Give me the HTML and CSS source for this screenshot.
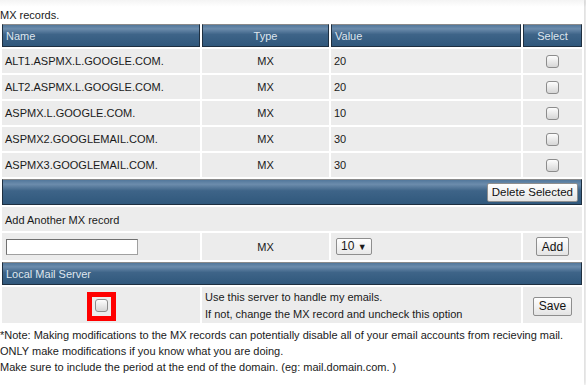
FILE: index.html
```html
<!DOCTYPE html>
<html lang="en">
<head>
    <meta charset="UTF-8">
    <title>MX records</title>
    <link rel="stylesheet" href="styles.css">
</head>
<body>
    <div class="pagina">
        <p class="intro">MX records.</p>
        <!-- Elenco record MX -->
        <table class="griglia">
            <tr>
                <th class="col-nome">Name</th>
                <th class="col-tipo centro">Type</th>
                <th class="col-valore">Value</th>
                <th class="col-sel centro">Select</th>
            </tr>
            <tr>
                <td>ALT1.ASPMX.L.GOOGLE.COM.</td>
                <td class="centro">MX</td>
                <td>20</td>
                <td class="centro"><span class="spunta"></span></td>
            </tr>
            <tr>
                <td>ALT2.ASPMX.L.GOOGLE.COM.</td>
                <td class="centro">MX</td>
                <td>20</td>
                <td class="centro"><span class="spunta"></span></td>
            </tr>
            <tr>
                <td>ASPMX.L.GOOGLE.COM.</td>
                <td class="centro">MX</td>
                <td>10</td>
                <td class="centro"><span class="spunta"></span></td>
            </tr>
            <tr>
                <td>ASPMX2.GOOGLEMAIL.COM.</td>
                <td class="centro">MX</td>
                <td>30</td>
                <td class="centro"><span class="spunta"></span></td>
            </tr>
            <tr>
                <td>ASPMX3.GOOGLEMAIL.COM.</td>
                <td class="centro">MX</td>
                <td>30</td>
                <td class="centro"><span class="spunta"></span></td>
            </tr>
            <!-- Barra elimina -->
            <tr>
                <th colspan="4" class="barra"><button class="bottone">Delete Selected</button></th>
            </tr>
            <!-- Nuovo record -->
            <tr>
                <td colspan="4" class="riga-titolo">Add Another MX record</td>
            </tr>
            <tr>
                <td><span class="campo"></span></td>
                <td class="centro">MX</td>
                <td><span class="scelta">10 <span class="freccia">&#9660;</span></span></td>
                <td class="centro"><button class="bottone">Add</button></td>
            </tr>
            <!-- Server locale -->
            <tr>
                <th colspan="4">Local Mail Server</th>
            </tr>
            <tr class="riga-server">
                <td class="centro"><span class="riquadro"><span class="spunta"></span></span></td>
                <td colspan="2" class="testo-server">Use this server to handle my emails.<br>If not, change the MX record and uncheck this option</td>
                <td class="centro"><button class="bottone">Save</button></td>
            </tr>
        </table>
        <div class="nota">
            *Note: Making modifications to the MX records can potentially disable all of your email accounts from recieving mail.<br>
            ONLY make modifications if you know what you are doing.<br>
            Make sure to include the period at the end of the domain. (eg: mail.domain.com. )
        </div>
    </div>
</body>
</html>
```

FILE: styles.css
```css
/* Stile globale */
body {
    font-family: "Liberation Sans", Arial, sans-serif;
    font-size: 11px;
    margin: 0;
    padding: 0;
    background: linear-gradient(#ececec, #ffffff 7px);
    color: #1a1a1a;
}
.pagina {
    width: 584px;
    min-height: 385px;
    background: linear-gradient(#f4f4f4, #ffffff 7px);
    box-shadow: 2px 0 4px rgba(0, 0, 0, 0.15);
}
.intro {
    margin: 0;
    padding-top: 8px;
    line-height: 15px;
    height: 16px;
}
.griglia {
    width: 584px;
    border-collapse: separate;
    border-spacing: 2px;
    margin-top: -2px;
}
.griglia th {
    height: 17px;
    padding: 2px 3px;
    text-align: left;
    font-weight: normal;
    color: #dfe6ee;
    background: linear-gradient(#52779b 0%, #6c8cac 18%, #3e6488 45%, #30587c 100%);
    border: 1px solid #1e2f40;
    border-top-color: #8a8a8a;
}
.griglia td {
    height: 16px;
    padding: 4px 3px 4px 3px;
    background-color: #ececec;
}
.col-nome {
    width: 190px;
}
.col-tipo {
    width: 119px;
}
.col-valore {
    width: 182px;
}
.griglia .centro {
    text-align: center;
}
.griglia .barra {
    height: 20px;
    padding: 2px 3px;
    text-align: right;
}
.griglia .riga-titolo {
    padding: 5px 3px 3px 3px;
}
.spunta {
    display: inline-block;
    width: 11px;
    height: 11px;
    border: 1px solid #8c8c8c;
    border-radius: 3px;
    background: linear-gradient(#fdfdfd, #d6d6d6);
    vertical-align: middle;
}
.bottone {
    font-family: "Liberation Sans", Arial, sans-serif;
    font-size: 12px;
    color: #111;
    height: 19px;
    padding: 0 5px;
    border: 1px solid #8e8e8e;
    border-radius: 2px;
    background: linear-gradient(#ffffff, #e4e4e4);
    vertical-align: middle;
}
.barra .bottone {
    font-size: 11.5px;
    padding: 0 4px;
}
.campo {
    display: inline-block;
    width: 130px;
    height: 14px;
    margin-left: 1px;
    background-color: white;
    border: 1px solid #a0a0a0;
    border-top-color: #707070;
    border-left-color: #707070;
    vertical-align: middle;
}
.scelta {
    display: inline-block;
    height: 15px;
    line-height: 15px;
    padding: 0 4px;
    margin-left: 2px;
    font-size: 12px;
    border: 1px solid #8e8e8e;
    border-radius: 2px;
    background: linear-gradient(#ffffff, #e8e8e8);
    vertical-align: middle;
}
.freccia {
    font-size: 9px;
}
.riquadro {
    display: inline-block;
    width: 19px;
    height: 19px;
    line-height: 19px;
    border: 5px solid #ff0000;
    background-color: #ececec;
    text-align: center;
    vertical-align: middle;
}
.riquadro .spunta {
    vertical-align: -2px;
}
.griglia .riga-server td {
    height: 34px;
    padding: 2px 3px 0 3px;
}
.testo-server {
    line-height: 17px;
}
.nota {
    line-height: 16px;
    padding-top: 2px;
}
```
